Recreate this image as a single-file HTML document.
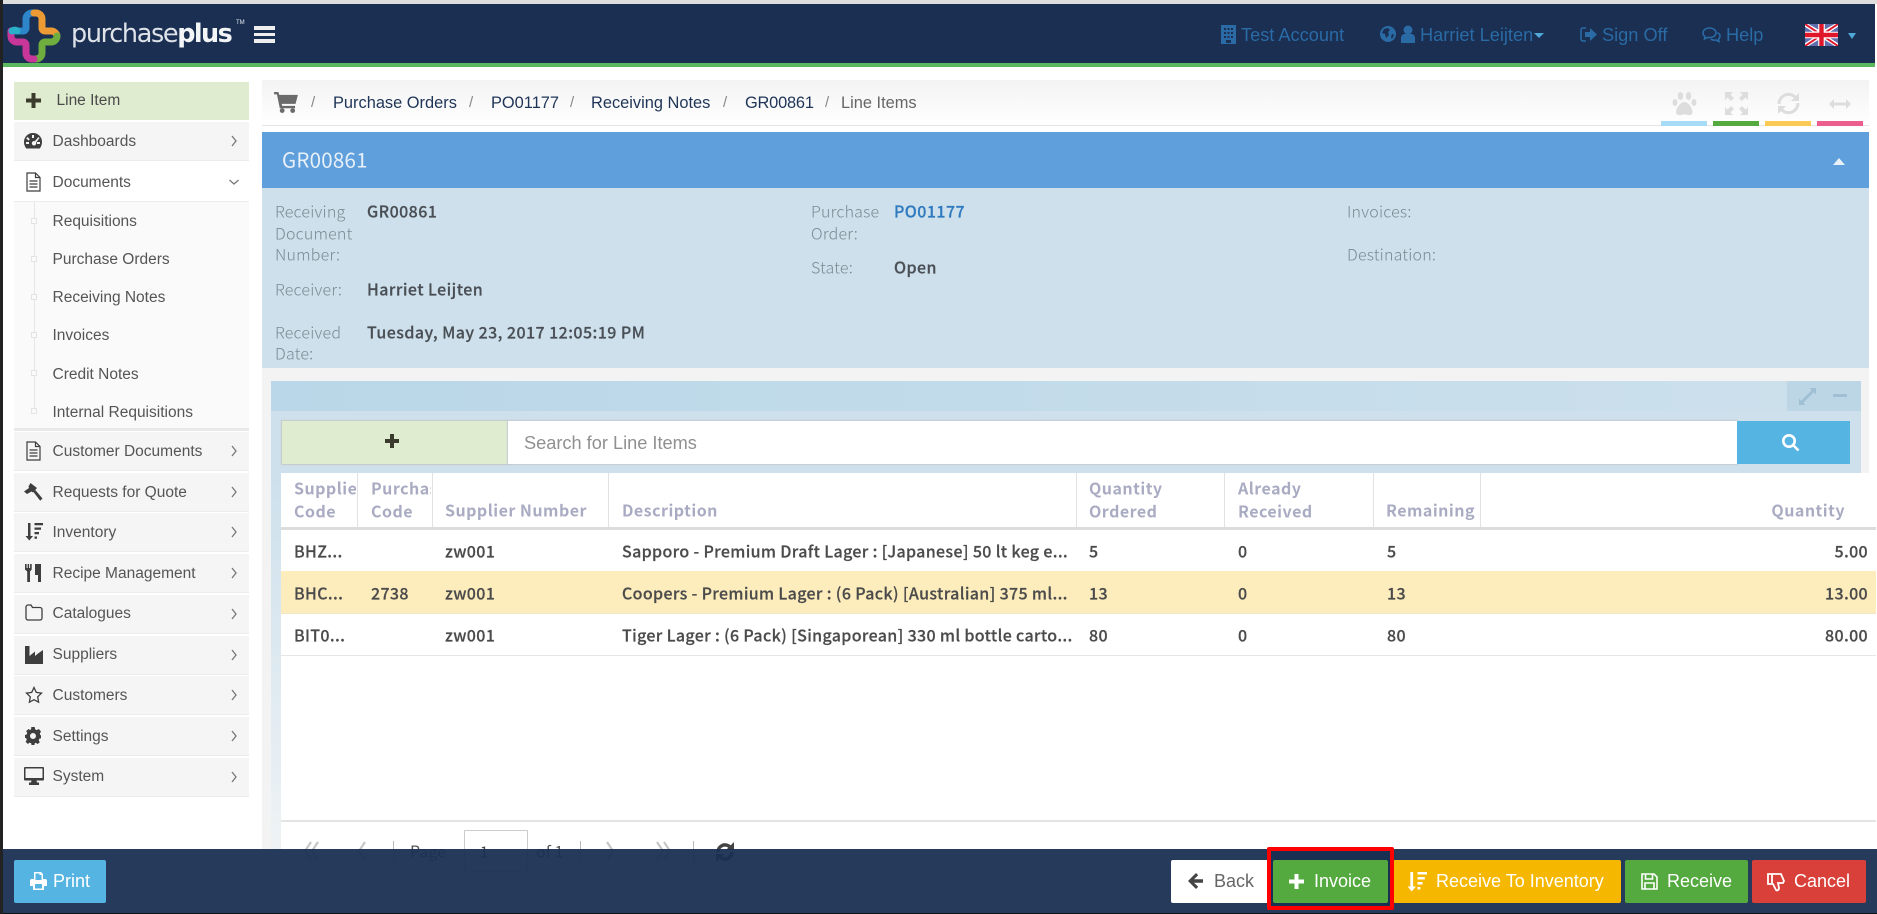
<!DOCTYPE html>
<html><head><meta charset="utf-8"><title>GR00861</title>
<style>
html,body{margin:0;padding:0;background:#fff}
#r{position:relative;width:1877px;height:914px;overflow:hidden;background:#fff;font-family:"Liberation Sans",sans-serif;filter:blur(.35px)}
.a{position:absolute}
.t{position:absolute;white-space:nowrap;line-height:20px;height:20px}
.side{font-size:15.5px;color:#555}
.row{position:absolute;left:14px;width:235px;height:38px;background:#f5f5f5;border-bottom:1px solid #ececec}
.o{font-family:"Noto Sans CJK JP","Liberation Sans",sans-serif;transform:translateY(-1.5px)}
.lb{font-size:16px;color:#7d8a93;font-weight:300;letter-spacing:.2px}
.v{font-size:16px;color:#4a4f55;font-weight:500;letter-spacing:.43px;-webkit-text-stroke:.2px #4a4f55}
.h{font-size:16px;color:#a9abc2;font-weight:700;letter-spacing:.48px}
.c{font-size:16px;color:#4b4b4b;font-weight:500;letter-spacing:.34px;-webkit-text-stroke:.2px #4b4b4b}
.nav{font-size:18.2px;color:#2a6aa5}
.bc{font-size:16.4px;color:#1f3557}
.sep{font-size:15px;color:#888}
.btn{position:absolute;top:860px;height:43px;border-radius:2px;color:#fff;font-size:18px;line-height:43px;white-space:nowrap}
.bt{font-size:18px;color:#fff;transform:translateY(-1px)}
svg{position:absolute;display:block}
.vl{position:absolute;top:473px;height:54px;width:1px;background:#e2e2e2}
</style></head><body>
<div id="r">

<!-- frame strips -->
<div class="a" style="left:0;top:0;width:1877px;height:4px;background:#dedede"></div>
<div class="a" style="left:0;top:0;width:3px;height:914px;background:#222;z-index:9"></div>

<!-- navbar -->
<div class="a" style="left:3px;top:4px;width:1872px;height:59px;background:#1a2f52"></div>
<div class="a" style="left:3px;top:63px;width:1872px;height:4px;background:#5cb85c"></div>

<!-- logo -->
<svg style="left:7px;top:9px" width="54" height="54" viewBox="0 0 54 54" fill="none" stroke-width="7" stroke-linecap="round" stroke-linejoin="round">
<path d="M5 22 h11 a3 3 0 0 0 3 -3 V10 a6 6 0 0 1 6 -6 h2" stroke="#2c86c9"/>
<path d="M27 4 h2 a6 6 0 0 1 6 6 v9 a3 3 0 0 0 3 3 h6 a6 6 0 0 1 6 5" stroke="#ec9a34"/>
<path d="M50 27 a6 6 0 0 1 -6 6 h-6 a3 3 0 0 0 -3 3 v8 a6 6 0 0 1 -6 6 h-2" stroke="#6fae3e"/>
<path d="M27 50 h-2 a6 6 0 0 1 -6 -6 v-8 a3 3 0 0 0 -3 -3 h-7 a6 6 0 0 1 -5 -6 v-5" stroke="#c8369a"/>
<path d="M5 22 a5 5 0 0 1 5 -0.2" stroke="#2bb0c9"/>
</svg>
<div class="t" style="left:71px;top:20px;height:28px;line-height:28px;font-size:25.500px;color:#dfe3e9;font-family:'DejaVu Sans',sans-serif;letter-spacing:-1.35px"><span style="font-weight:400">purchase</span><b style="color:#f2f4f6;letter-spacing:-1.6px">plus</b></div>
<div class="t" style="left:236px;top:13px;font-size:6px;color:#e6e9ee">TM</div>
<div class="a" style="left:254px;top:26px;width:21px;height:3.5px;background:#eee"></div>
<div class="a" style="left:254px;top:32.5px;width:21px;height:3.5px;background:#eee"></div>
<div class="a" style="left:254px;top:39px;width:21px;height:3.5px;background:#eee"></div>

<!-- nav right -->
<svg style="left:1221px;top:25px" width="15" height="19" viewBox="0 0 15 19"><path fill="#2a6aa5" fill-rule="evenodd" d="M0 0h15v19H0zM3 3v2h2V3zM6.500 3v2h2V3zM10 3v2h2V3zM3 7v2h2V7zM6.500 7v2h2V7zM10 7v2h2V7zM3 11v2h2v-2zM6.500 11v2h2v-2zM10 11v2h2v-2zM5 15v3h5v-3z"/></svg>
<div class="t nav" style="left:1241px;top:25px">Test Account</div>
<svg style="left:1380px;top:26px" width="16" height="16" viewBox="0 0 16 16"><circle cx="8" cy="8" r="8" fill="#2a6aa5"/><path d="M4 3l4 -1 2 2-2 2 1 3-3 3-1-4-3-1zM12 8l2 1-2 4-1-2z" fill="#1a2f52"/></svg>
<svg style="left:1401px;top:25px" width="14" height="18" viewBox="0 0 14 18"><circle cx="7" cy="5" r="4.500" fill="#2a6aa5"/><path d="M0 18v-5c0-3 2-4 4-4h6c2 0 4 1 4 4v5z" fill="#2a6aa5"/></svg>
<div class="t nav" style="left:1420px;top:25px">Harriet Leijten</div>
<div class="a" style="left:1534px;top:33px;border:5px solid transparent;border-top:5px solid #4fa8d8;border-bottom:0"></div>
<svg style="left:1580px;top:27px" width="17" height="15" viewBox="0 0 17 15"><path fill="none" stroke="#2a6aa5" stroke-width="1.600" d="M6 1H3a2 2 0 0 0-2 2v9a2 2 0 0 0 2 2h3"/><path fill="#2a6aa5" d="M5 5h5V1l7 6.500L10 14v-4H5z"/></svg>
<div class="t nav" style="left:1602px;top:25px">Sign Off</div>
<svg style="left:1702px;top:27px" width="19" height="16" viewBox="0 0 19 16" fill="none" stroke="#2a6aa5" stroke-width="1.600"><path d="M7.500 1C4 1 1 3 1 6c0 1.500.8 2.800 2 3.600L2.500 12l3-1.600c.6.100 1.300.2 2 .2 3.500 0 6.500-2 6.500-4.800S11 1 7.500 1z"/><path d="M15.500 5.500c1.500 1 2.500 2 2.500 3.500 0 1.300-.8 2.400-1.500 3l.5 2.500-3-1.500c-2 .3-4 0-5-1"/></svg>
<div class="t nav" style="left:1726px;top:25px">Help</div>
<svg style="left:1805px;top:24px" width="33" height="22" viewBox="0 0 60 40"><rect width="60" height="40" fill="#fff"/><path d="M0 0l60 40M60 0L0 40" stroke="#fff" stroke-width="8"/><path d="M0 0l60 40M60 0L0 40" stroke="#e0162b" stroke-width="3.500"/><path d="M30 0v40M0 20h60" stroke="#fff" stroke-width="13"/><path d="M30 0v40M0 20h60" stroke="#e0162b" stroke-width="8"/><path d="M6 0h18v10zM36 0h18l-18 10zM60 5v9l-14 0zM60 26v9l-14-9zM36 40h18l-18-11zM6 40h18V29zM0 26l14 0-14 9zM0 5l14 9H0z" fill="#2b3f8f" opacity=".75"/></svg>
<div class="a" style="left:1848px;top:33px;border:4.5px solid transparent;border-top:6px solid #4fa8d8;border-bottom:0"></div>

<!-- sidebar -->
<div class="a" style="left:14px;top:82px;width:235px;height:38px;background:#dfeccf"></div>
<svg style="left:26px;top:93px" width="15" height="15" viewBox="0 0 15 15"><path fill="#3c3c2e" d="M5.500 0h4v5.500H15v4H9.500V15h-4V9.500H0v-4h5.500z"/></svg>
<div class="t side" style="left:56.500px;top:91px;color:#4a4a4a">Line Item</div>

<div class="row" style="top:122px"></div>
<div class="a" style="left:14px;top:163px;width:235px;height:38px;background:#fff;border-bottom:1px solid #ececec"></div>
<div class="a" style="left:14px;top:202px;width:235px;height:226px;background:#fafafa;border-bottom:3px solid #e9e9e9"></div>
<div class="a" style="left:33.500px;top:202px;width:1px;height:210px;background:#e6e6e6"></div>
<div class="a" style="left:31px;top:218px;width:4px;height:4px;border:1px solid #e4e4e4;background:#fafafa"></div>
<div class="a" style="left:31px;top:256px;width:4px;height:4px;border:1px solid #e4e4e4;background:#fafafa"></div>
<div class="a" style="left:31px;top:294px;width:4px;height:4px;border:1px solid #e4e4e4;background:#fafafa"></div>
<div class="a" style="left:31px;top:332px;width:4px;height:4px;border:1px solid #e4e4e4;background:#fafafa"></div>
<div class="a" style="left:31px;top:370px;width:4px;height:4px;border:1px solid #e4e4e4;background:#fafafa"></div>
<div class="a" style="left:31px;top:408px;width:4px;height:4px;border:1px solid #e4e4e4;background:#fafafa"></div>
<div class="row" style="top:432px"></div>
<div class="row" style="top:472.500px"></div>
<div class="row" style="top:513px"></div>
<div class="row" style="top:554px"></div>
<div class="row" style="top:595px"></div>
<div class="row" style="top:635.500px"></div>
<div class="row" style="top:676px"></div>
<div class="row" style="top:717px"></div>
<div class="row" style="top:758px"></div>

<div class="t side" style="left:52.500px;top:131.500px">Dashboards</div>
<div class="t side" style="left:52.500px;top:172.500px">Documents</div>
<div class="t side" style="left:52.500px;top:212px">Requisitions</div>
<div class="t side" style="left:52.500px;top:250px">Purchase Orders</div>
<div class="t side" style="left:52.500px;top:288px">Receiving Notes</div>
<div class="t side" style="left:52.500px;top:326px">Invoices</div>
<div class="t side" style="left:52.500px;top:364.500px">Credit Notes</div>
<div class="t side" style="left:52.500px;top:402.500px">Internal Requisitions</div>
<div class="t side" style="left:52.500px;top:441.500px">Customer Documents</div>
<div class="t side" style="left:52.500px;top:482.500px">Requests for Quote</div>
<div class="t side" style="left:52.500px;top:522.500px">Inventory</div>
<div class="t side" style="left:52.500px;top:563.500px">Recipe Management</div>
<div class="t side" style="left:52.500px;top:604px">Catalogues</div>
<div class="t side" style="left:52.500px;top:645px">Suppliers</div>
<div class="t side" style="left:52.500px;top:685.500px">Customers</div>
<div class="t side" style="left:52.500px;top:726.500px">Settings</div>
<div class="t side" style="left:52.500px;top:767px">System</div>

<!-- sidebar chevrons -->
<svg style="left:228px;top:130px" width="12" height="30" viewBox="0 0 12 30" fill="none" stroke="#777" stroke-width="1.300"><path d="M4 6l4 5-4 5"/></svg>
<svg style="left:228px;top:176px" width="12" height="12" viewBox="0 0 12 12" fill="none" stroke="#777" stroke-width="1.300"><path d="M1.500 4l4.500 4 4.500-4"/></svg>
<svg style="left:228px;top:440px" width="12" height="350" viewBox="0 0 12 350" fill="none" stroke="#777" stroke-width="1.300"><path d="M4 6l4 5-4 5M4 47l4 5-4 5M4 87l4 5-4 5M4 128l4 5-4 5M4 169l4 5-4 5M4 210l4 5-4 5M4 250l4 5-4 5M4 291l4 5-4 5M4 332l4 5-4 5"/></svg>

<!-- sidebar icons -->
<svg style="left:24px;top:132px" width="18" height="18" viewBox="0 0 18 18"><path fill="#3e3e3e" fill-rule="evenodd" d="M9 1a8.800 8.800 0 0 1 9 9c0 2.500-.8 4.700-2.300 6.500H2.300A9.800 9.800 0 0 1 0 10a8.800 8.800 0 0 1 9-9zM8 3v3h2V3zM3.500 5l-1.300 1.300 2.300 2.300 1.300-1.300zM14.500 5l-3.700 4.200a2.200 2.200 0 1 0 1.300 1.300L15.500 6zM2 10v2h3v-2zM13 10v2h3v-2z"/></svg>
<svg style="left:25.500px;top:172px" width="15" height="20" viewBox="0 0 15 20" fill="none" stroke="#3e3e3e" stroke-width="1.200"><path d="M1 1h8.500L14 5.500V19H1z"/><path d="M9.500 1v4.500H14M3.500 9h8M3.500 12h8M3.500 15h8"/></svg>
<svg style="left:25.500px;top:441px" width="15" height="20" viewBox="0 0 15 20" fill="none" stroke="#3e3e3e" stroke-width="1.200"><path d="M1 1h8.500L14 5.500V19H1z"/><path d="M9.500 1v4.500H14M3.500 9h8M3.500 12h8M3.500 15h8"/></svg>
<svg style="left:24px;top:483px" width="19" height="18" viewBox="0 0 19 18"><path fill="#3e3e3e" d="M6.500 0L13 5 9 9.500l-1.500-1L3 11 0 8.500l5-3.500L4.500 3.500zM9.500 9l1.800-2 7.200 8.500-2.300 2.300z"/></svg>
<svg style="left:24.500px;top:523px" width="18" height="18" viewBox="0 0 18 18"><path fill="#3e3e3e" d="M3 0h2.500v13H8l-3.700 4.500L.5 13H3zM9.500 0H18v2.200H9.500zM9.500 4.500H16v2.200H9.500zM9.500 9H14v2.200H9.500zM9.500 13.500H12v2.200H9.500z"/></svg>
<svg style="left:25px;top:564px" width="16" height="18" viewBox="0 0 16 18"><path fill="#3e3e3e" d="M0 0h1.600v4h1V0h1.500v4h1V0h1.600v5.500L5 7.500V18H2.200V7.500L0 5.500zM10 0h6v18h-3v-7h-3z"/></svg>
<svg style="left:24.500px;top:604px" width="18" height="17" viewBox="0 0 18 17" fill="none" stroke="#3e3e3e" stroke-width="1.300"><path d="M1 3a2 2 0 0 1 2-2h3l1.500 2.500H15a2 2 0 0 1 2 2V14a2 2 0 0 1-2 2H3a2 2 0 0 1-2-2z"/></svg>
<svg style="left:24.500px;top:646px" width="18" height="18" viewBox="0 0 18 18"><path fill="#3e3e3e" d="M0 0h4.500v10L10 5.500V10l3-2.500L18 4v14H0z"/></svg>
<svg style="left:24.500px;top:686px" width="18" height="18" viewBox="0 0 18 18" fill="none" stroke="#3e3e3e" stroke-width="1.300"><path d="M9 1.500l2.300 4.900 5.200.7-3.800 3.700.9 5.400L9 13.700l-4.600 2.500.9-5.400L1.500 7.100l5.200-.7z"/></svg>
<svg style="left:25px;top:727px" width="16" height="18" viewBox="0 0 16 18"><path fill="#3e3e3e" fill-rule="evenodd" d="M6.300 0h3.400l.4 2.300 1.700.8L13.800 2 16 4.500 14.800 6.500l.5 1.600L16 8.500v2.800l-1.700.5-.5 1.600 1 2L12.500 17l-1.700-1.200-1.100.6L9.500 18h-3l-.3-1.800-1.700-.6L2.900 17 .6 14.700l1.200-1.900-.6-1.600L0 10.800V8l1.700-.5.500-1.600L1.200 4 3.500 2l1.600 1 1-.7zM8 6a3 3 0 1 0 0 6 3 3 0 0 0 0-6z"/></svg>
<svg style="left:23.500px;top:767px" width="20" height="18" viewBox="0 0 20 18"><path fill="#3e3e3e" fill-rule="evenodd" d="M1 0h18a1 1 0 0 1 1 1v11.500a1 1 0 0 1-1 1h-6.500l.5 2h2V18H5v-2.500h2l.5-2H1a1 1 0 0 1-1-1V1a1 1 0 0 1 1-1zM1.500 1.500V11h17V1.500z"/></svg>

<!-- breadcrumb -->
<div class="a" style="left:262px;top:80px;width:1607px;height:45px;background:linear-gradient(#f3f3f3,#fff);border-bottom:1px solid #e4e4e4"></div>
<svg style="left:274px;top:92px" width="24" height="21" viewBox="0 0 25 22"><path fill="#6b6b6b" d="M0 0h4.500l1 3H25l-2.500 9.500H8l.5 2H22V17H6L3 2.500H0z"/><circle cx="8.500" cy="19.500" r="2.500" fill="#6b6b6b"/><circle cx="19.500" cy="19.500" r="2.500" fill="#6b6b6b"/></svg>
<div class="t sep" style="left:311px;top:93px">/</div>
<div class="t bc" style="left:333px;top:93px">Purchase Orders</div>
<div class="t sep" style="left:469px;top:93px">/</div>
<div class="t bc" style="left:491px;top:93px">PO01177</div>
<div class="t sep" style="left:570px;top:93px">/</div>
<div class="t bc" style="left:591px;top:93px">Receiving Notes</div>
<div class="t sep" style="left:723px;top:93px">/</div>
<div class="t bc" style="left:745px;top:93px;letter-spacing:-.2px">GR00861</div>
<div class="t sep" style="left:825px;top:93px">/</div>
<div class="t bc" style="left:841px;top:93px;color:#666">Line Items</div>

<!-- tool icons -->
<svg style="left:1672px;top:92px" width="25" height="24" viewBox="0 0 25 24" fill="#ddd"><ellipse cx="8.500" cy="4" rx="2.700" ry="4"/><ellipse cx="16.500" cy="4" rx="2.700" ry="4"/><ellipse cx="3" cy="10.500" rx="2.500" ry="3.500"/><ellipse cx="22" cy="10.500" rx="2.500" ry="3.500"/><path d="M12.500 10c4 0 8 6 8 10 0 3-3 3.500-4.500 3-1.500-.4-2.500-.8-3.500-.8s-2 .4-3.500.8C7 23.500 4 23 4 20c0-4 4.500-10 8.500-10z"/></svg>
<svg style="left:1725px;top:92px" width="23" height="23" viewBox="0 0 23 23" fill="#ddd"><path d="M0 0h8L5.500 2.500l3.500 3.500L6 9 2.500 5.500 0 8zM23 0v8l-2.500-2.500L17 9l-3-3 3.500-3.500L15 0zM0 23v-8l2.500 2.500L6 14l3 3-3.500 3.500L8 23zM23 23h-8l2.500-2.500L14 17l3-3 3.500 3.500L23 15z"/></svg>
<svg style="left:1777px;top:92px" width="23" height="23" viewBox="0 0 23 23" fill="none" stroke="#ddd" stroke-width="3"><path d="M2 12a9.500 9.500 0 0 1 17-6"/><path d="M21 11a9.500 9.500 0 0 1-17 6"/><path d="M22 1v8h-8z" fill="#ddd" stroke="none"/><path d="M1 22v-8h8z" fill="#ddd" stroke="none"/></svg>
<svg style="left:1829px;top:99px" width="22" height="10" viewBox="0 0 22 10" fill="#ddd"><path d="M0 5l5-5v3.500h12V0l5 5-5 5V6.500H5V10z"/></svg>
<div class="a" style="left:1661px;top:121px;width:46px;height:5px;background:#a6dcf7"></div>
<div class="a" style="left:1713px;top:121px;width:46px;height:5px;background:#54a93f"></div>
<div class="a" style="left:1765px;top:121px;width:46px;height:5px;background:#fdcb55"></div>
<div class="a" style="left:1817px;top:121px;width:46px;height:5px;background:#ec5e8d"></div>

<!-- panel -->
<div class="a" style="left:262px;top:132px;width:1607px;height:56px;background:#5e9fdc"></div>
<div class="t o" style="left:282px;top:150px;font-size:20.500px;color:#e8f0f8;font-weight:400;letter-spacing:.25px">GR00861</div>
<div class="a" style="left:1833px;top:158px;border:6.500px solid transparent;border-bottom:7px solid #e8f0f8;border-top:0"></div>
<div class="a" style="left:262px;top:188px;width:1607px;height:180px;background:#cde0ec"></div>

<div class="t o lb" style="left:275px;top:202px">Receiving</div>
<div class="t o lb" style="left:275px;top:223.500px">Document</div>
<div class="t o lb" style="left:275px;top:245px">Number:</div>
<div class="t o v" style="left:367px;top:202px">GR00861</div>
<div class="t o lb" style="left:275px;top:280px">Receiver:</div>
<div class="t o v" style="left:367px;top:280px">Harriet Leijten</div>
<div class="t o lb" style="left:275px;top:323px">Received</div>
<div class="t o lb" style="left:275px;top:344px">Date:</div>
<div class="t o v" style="left:367px;top:323px">Tuesday, May 23, 2017 12:05:19 PM</div>
<div class="t o lb" style="left:811px;top:202px">Purchase</div>
<div class="t o lb" style="left:811px;top:223.500px">Order:</div>
<div class="t o v" style="left:894px;top:202px;color:#2f7abf;-webkit-text-stroke:.2px #2f7abf">PO01177</div>
<div class="t o lb" style="left:811px;top:258px">State:</div>
<div class="t o v" style="left:894px;top:258px">Open</div>
<div class="t o lb" style="left:1347px;top:202px">Invoices:</div>
<div class="t o lb" style="left:1347px;top:245px">Destination:</div>

<!-- gutter -->
<div class="a" style="left:262px;top:368px;width:1607px;height:13px;background:#f3f3f3"></div>
<div class="a" style="left:262px;top:381px;width:9px;height:533px;background:#f3f3f3"></div>
<div class="a" style="left:271px;top:473px;width:10px;height:407px;background:linear-gradient(#cde0ec,#f1f4f6)"></div>
<div class="a" style="left:1861px;top:368px;width:8px;height:105px;background:#f3f3f3"></div>

<!-- widget -->
<div class="a" style="left:271px;top:381px;width:1590px;height:30px;background:linear-gradient(90deg,#b9d7e8,#cde0ec)"></div>
<div class="a" style="left:271px;top:411px;width:1590px;height:62px;background:#cde0ec"></div>
<div class="a" style="left:1787px;top:381px;width:74px;height:30px;background:#bcd6e6"></div>
<svg style="left:1799px;top:388px" width="17" height="17" viewBox="0 0 17 17" fill="#9fc0d4"><path d="M10.500 0H17v6.500l-2.200-2.200L4.300 14.800 6.500 17H0v-6.500l2.200 2.200L12.700 2.200z"/></svg>
<div class="a" style="left:1833px;top:394px;width:14px;height:3px;background:#9fc0d4"></div>

<!-- search -->
<div class="a" style="left:282px;top:421px;width:226px;height:43px;background:#dfeccf;box-shadow:0 0 1px 1px #c5c9c5"></div>
<svg style="left:385px;top:434px" width="14" height="14" viewBox="0 0 14 14"><path fill="#3c3c2e" d="M5 0h4v5h5v4H9v5H5V9H0V5h5z"/></svg>
<div class="a" style="left:508px;top:421px;width:1229px;height:43px;background:#fff;box-shadow:0 0 1px 1px #c5cbd0"></div>
<div class="t" style="left:524px;top:433px;font-size:18.200px;color:#909090">Search for Line Items</div>
<div class="a" style="left:1737px;top:421px;width:113px;height:43px;background:#56b4e3"></div>
<svg style="left:1781px;top:433px" width="19" height="19" viewBox="0 0 19 19" fill="none" stroke="#fff" stroke-width="2.600"><circle cx="8" cy="8" r="5.700"/><path d="M12.500 12.500l5 5"/></svg>

<!-- table -->
<div class="a" style="left:281px;top:473px;width:1595px;height:376px;background:#fff"></div>
<div class="a" style="left:281px;top:527px;width:1595px;height:3px;background:#dcdcdc"></div>
<div class="vl" style="left:357px"></div><div class="vl" style="left:432px"></div><div class="vl" style="left:608px"></div><div class="vl" style="left:1076px"></div><div class="vl" style="left:1224px"></div><div class="vl" style="left:1373px"></div><div class="vl" style="left:1480px"></div>

<div class="a" style="left:294px;top:478px;width:62px;height:46px;overflow:hidden"><div class="t o h" style="left:0;top:1px">Supplier</div><div class="t o h" style="left:0;top:23.500px">Code</div></div>
<div class="a" style="left:371px;top:478px;width:60px;height:46px;overflow:hidden"><div class="t o h" style="left:0;top:1px">Purchase</div><div class="t o h" style="left:0;top:23.500px">Code</div></div>
<div class="t o h" style="left:445px;top:500.500px">Supplier Number</div>
<div class="t o h" style="left:622px;top:500.500px">Description</div>
<div class="t o h" style="left:1089px;top:479px">Quantity</div>
<div class="t o h" style="left:1089px;top:501.500px">Ordered</div>
<div class="t o h" style="left:1238px;top:479px">Already</div>
<div class="t o h" style="left:1238px;top:501.500px">Received</div>
<div class="t o h" style="left:1386px;top:500.500px">Remaining</div>
<div class="t o h" style="right:32px;top:500.500px">Quantity</div>

<div class="a" style="left:281px;top:571px;width:1595px;height:43px;background:#fdedbd;border-bottom:1px solid #f1e6c8;box-sizing:border-box"></div>
<div class="a" style="left:281px;top:655px;width:1595px;height:1px;background:#e6e6e6"></div>
<div class="a" style="left:281px;top:820px;width:1595px;height:2px;background:#e4e4e4"></div>

<div class="t o c" style="left:294px;top:542px">BHZ...</div><div class="t o c" style="left:445px;top:542px">zw001</div>
<div class="t o c" style="left:622px;top:542px">Sapporo - Premium Draft Lager : [Japanese] 50 lt keg e...</div>
<div class="t o c" style="left:1089px;top:542px">5</div><div class="t o c" style="left:1238px;top:542px">0</div><div class="t o c" style="left:1387px;top:542px">5</div><div class="t o c" style="right:9px;top:542px">5.00</div>

<div class="t o c" style="left:294px;top:584px">BHC...</div><div class="t o c" style="left:371px;top:584px">2738</div><div class="t o c" style="left:445px;top:584px">zw001</div>
<div class="t o c" style="left:622px;top:584px">Coopers - Premium Lager : (6 Pack) [Australian] 375 ml...</div>
<div class="t o c" style="left:1089px;top:584px">13</div><div class="t o c" style="left:1238px;top:584px">0</div><div class="t o c" style="left:1387px;top:584px">13</div><div class="t o c" style="right:9px;top:584px">13.00</div>

<div class="t o c" style="left:294px;top:626px">BIT0...</div><div class="t o c" style="left:445px;top:626px">zw001</div>
<div class="t o c" style="left:622px;top:626px">Tiger Lager : (6 Pack) [Singaporean] 330 ml bottle carto...</div>
<div class="t o c" style="left:1089px;top:626px">80</div><div class="t o c" style="left:1238px;top:626px">0</div><div class="t o c" style="left:1387px;top:626px">80</div><div class="t o c" style="right:9px;top:626px">80.00</div>

<!-- pager (mostly beneath footer) -->
<svg style="left:303px;top:840px" width="420" height="24" viewBox="0 0 420 24" fill="none" stroke="#c6c6c6" stroke-width="2.200"><path d="M8 2L2 11l6 9M15 2L9 11l6 9M62 2l-6 9 6 9M304 2l6 9-6 9M354 2l6 9-6 9M361 2l6 9-6 9"/></svg>
<div class="a" style="left:393px;top:841px;width:1px;height:24px;background:#bbb"></div>
<div class="t o" style="left:410px;top:842px;font-size:16px;color:#555">Page</div>
<div class="a" style="left:464px;top:830px;width:62px;height:40px;border:1px solid #ccc;box-sizing:content-box"></div>
<div class="t o" style="left:480px;top:844px;font-size:15px;color:#444">1</div>
<div class="t o" style="left:536px;top:842px;font-size:16px;color:#555">of 1</div>
<div class="a" style="left:580px;top:841px;width:1px;height:24px;background:#bbb"></div>
<div class="a" style="left:693px;top:841px;width:1px;height:24px;background:#bbb"></div>
<svg style="left:715px;top:842px" width="20" height="20" viewBox="0 0 20 20" fill="none" stroke="#444" stroke-width="3.500"><path d="M3 10a7 7 0 0 1 12-5M17 10a7 7 0 0 1-12 5"/><path d="M19 0v8h-8zM1 20v-8h8z" fill="#444" stroke="none"/></svg>

<!-- footer -->
<div class="a" style="left:3px;top:849px;width:1874px;height:64px;background:rgba(26,48,82,.95)"></div>
<div class="a" style="left:3px;top:913px;width:1874px;height:1px;background:#111"></div>

<div class="btn" style="left:14px;width:92px;background:#56b4e3"></div>
<svg style="left:30px;top:872px" width="17" height="18" viewBox="0 0 17 18"><path fill="#fff" fill-rule="evenodd" d="M4 0h7l2 2v5h2a2 2 0 0 1 2 2v5h-3v4H3v-4H0V9a2 2 0 0 1 2-2h2zM5.500 1.500V8h6V3h-2V1.500zM5 12v4.500h7V12z"/></svg>
<div class="t bt" style="left:53px;top:871.500px">Print</div>

<div class="btn" style="left:1171px;width:100px;background:#fff"></div>
<svg style="left:1188px;top:873px" width="15" height="16" viewBox="0 0 15 16"><path fill="#444" d="M8 0l2.200 2.200L6 6.300h9v3.400H6l4.200 4.100L8 16 0 8z"/></svg>
<div class="t bt" style="left:1214px;top:871.500px;color:#666">Back</div>

<div class="btn" style="left:1393px;width:228px;background:#f5b700"></div>
<svg style="left:1407px;top:872px" width="20" height="20" viewBox="0 0 18 18"><path fill="#fff" d="M3 0h2.500v13H8l-3.700 4.500L.5 13H3zM9.500 0H18v2.200H9.500zM9.500 4.500H16v2.200H9.500zM9.500 9H14v2.200H9.500zM9.500 13.500H12v2.200H9.500z"/></svg>
<div class="t bt" style="left:1436px;top:871.500px">Receive To Inventory</div>

<div class="btn" style="left:1625px;width:123px;background:#54a93f"></div>
<svg style="left:1641px;top:873px" width="17" height="17" viewBox="0 0 17 17" fill="none" stroke="#fff" stroke-width="1.600"><path d="M1 1h12l3 3v12H1z"/><path d="M4.500 1v5h7V1M4 16v-6h9v6"/></svg>
<div class="t bt" style="left:1667px;top:871.500px">Receive</div>

<div class="btn" style="left:1752px;width:114px;background:#d9403a"></div>
<svg style="left:1767px;top:872px" width="18" height="20" viewBox="0 0 18 20" fill="none" stroke="#fff" stroke-width="1.800"><path d="M1 2h13l3 7-1 2h-5l1 5c0 2-2 3-3 2L6 12H1zM5 2v9"/></svg>
<div class="t bt" style="left:1794px;top:871.500px">Cancel</div>

<!-- invoice with red box -->
<div class="a" style="left:1267px;top:847px;width:127px;height:63px;border:4px solid #f00;box-sizing:border-box;border-radius:2px;background:#1a3052;z-index:3"></div>
<div class="btn" style="left:1273px;width:115px;background:#54a93f;z-index:4"></div>
<svg style="left:1289px;top:874px;z-index:5" width="15" height="15" viewBox="0 0 15 15"><path fill="#fff" d="M5.500 0h4v5.500H15v4H9.500V15h-4V9.500H0v-4h5.500z"/></svg>
<div class="t bt" style="left:1314px;top:871.500px;z-index:5">Invoice</div>

</div>
</body></html>
